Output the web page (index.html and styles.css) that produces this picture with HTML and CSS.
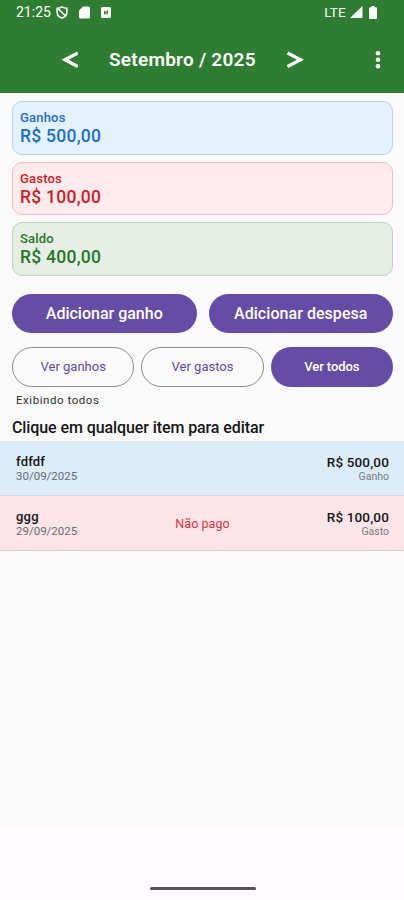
FILE: index.html
```html
<!DOCTYPE html>
<html lang="pt-BR">
<head>
<meta charset="utf-8">
<title>Setembro / 2025</title>
<link rel="stylesheet" href="styles.css">
</head>
<body>
<div class="screen">
  <header class="header">
    <div class="status">
      <span class="clock">21:25</span>
      <svg class="shield" width="12" height="13" viewBox="0 0 12 13" fill="none" stroke="#fff" stroke-width="1.600"><path d="M6 .9C4.500 1.900 3 2.200 1.200 2.300V6.500C1.200 9 3.300 11.200 6 12.100C8.700 11.200 10.800 9 10.800 6.500V2.300C9 2.200 7.500 1.900 6 .9Z"/><path d="M2 2.500L9.500 10"/></svg>
      <svg class="sd" width="11" height="13" viewBox="0 0 11 13"><path d="M4 .5H9.500Q11 .5 11 2V11Q11 12.500 9.500 12.500H1.500Q0 12.500 0 11V4.500Z" fill="#fff"/></svg>
      <svg class="note" width="10" height="11" viewBox="0 0 10 11"><rect width="10" height="11" rx="1.500" fill="#fff"/><path d="M3 7.500V3.500L5.500 5.500V3.500H7V7.500L4.500 6V7.500Z" fill="#2e7d32"/></svg>
      <span class="lte">LTE</span>
      <svg class="signal" width="13" height="12" viewBox="0 0 13 12"><path d="M12.500 0V12H0Z" fill="#fff"/></svg>
      <svg width="8" height="13" viewBox="0 0 8 13"><path d="M2.500 0H5.500V1.300H7Q8 1.300 8 2.300V12Q8 13 7 13H1Q0 13 0 12V2.300Q0 1.300 1 1.300H2.500Z" fill="#fff"/></svg>
    </div>
    <nav class="month">
      <svg width="16" height="18" viewBox="0 0 16 18" fill="none" stroke="#fff" stroke-width="3.300"><path d="M15.800 2L3 8.800L15.800 15.600"/></svg>
      <h1 class="title">Setembro / 2025</h1>
      <svg width="17" height="18" viewBox="0 0 17 18" fill="none" stroke="#fff" stroke-width="3.300"><path d="M.5 2L13.500 8.800L.5 15.600"/></svg>
      <svg class="more" width="6" height="20" viewBox="0 0 6 20" fill="#fff"><circle cx="3" cy="3.300" r="2.300"/><circle cx="3" cy="9.800" r="2.300"/><circle cx="3" cy="16.300" r="2.300"/></svg>
    </nav>
  </header>
  <main class="content">
    <section class="cards">
      <div class="card income"><span class="label">Ganhos</span><span class="amount">R$ 500,00</span></div>
      <div class="card expense"><span class="label">Gastos</span><span class="amount">R$ 100,00</span></div>
      <div class="card balance"><span class="label">Saldo</span><span class="amount">R$ 400,00</span></div>
    </section>
    <div class="actions">
      <button class="button solid add-income">Adicionar ganho</button>
      <button class="button solid">Adicionar despesa</button>
    </div>
    <div class="filters">
      <button class="button outline">Ver ganhos</button>
      <button class="button outline">Ver gastos</button>
      <button class="button solid active">Ver todos</button>
    </div>
    <p class="showing">Exibindo todos</p>
    <h2 class="hint">Clique em qualquer item para editar</h2>
    <div class="list">
      <div class="row row-income">
        <div class="info"><span class="name">fdfdf</span><span class="date">30/09/2025</span></div>
        <span class="state"></span>
        <div class="info right"><span class="value">R$ 500,00</span><span class="kind">Ganho</span></div>
      </div>
      <div class="row row-expense">
        <div class="info"><span class="name">ggg</span><span class="date">29/09/2025</span></div>
        <span class="state">Não pago</span>
        <div class="info right"><span class="value">R$ 100,00</span><span class="kind">Gasto</span></div>
      </div>
    </div>
  </main>
  <footer class="footer"><div class="handle"></div></footer>
</div>
</body>
</html>
```
FILE: styles.css
```css
* { box-sizing: border-box; margin: 0; padding: 0; }
body { font-family: Roboto, sans-serif; color: #151515; }
.screen { width: 404px; height: 900px; display: flex; flex-direction: column; background: #fafafa; overflow: hidden; }
svg { display: block; flex: none; }
.header { height: 93px; background: #2e7d32; color: #fff; flex: none; }
.status { height: 25px; display: flex; align-items: center; padding: 0 27px 1px 16px; }
.clock { font-size: 14px; width: 40px; }
.sd { margin-left: 11px; }
.note { margin-left: 11px; }
.lte { margin-left: auto; font-size: 13.500px; letter-spacing: .2px; }
.signal { margin: 0 6px 0 4px; }
.month { height: 68px; display: flex; align-items: center; padding: 1px 23px 0 62px; }
.title { width: 148px; margin: 0 30px 0 31px; font-size: 19px; font-weight: 600; letter-spacing: .25px; white-space: nowrap; }
.more { margin-left: auto; }
.content { height: 735px; flex: none; padding-top: 8px; }
.cards { display: flex; flex-direction: column; gap: 7px; padding: 0 11px 0 12px; }
.card { height: 54px; border: 1px solid; border-radius: 10px; padding: 7px 7px; display: flex; flex-direction: column; }
.card.expense { height: 53px; }
.label { font-size: 13px; line-height: 17px; font-weight: 500; letter-spacing: .2px; }
.amount { font-size: 17.500px; line-height: 20px; font-weight: 500; letter-spacing: .25px; }
.income { background: #e3f2fd; border-color: #b5d5f3; color: #1f6dcb; }
.expense { background: #ffebed; border-color: #efbfc6; color: #cc1e27; }
.balance { background: #e6eee6; border-color: #bfd0c0; color: #25772a; }
.actions { display: grid; grid-template-columns: 1fr 1fr; gap: 12px; padding: 18px 11px 0 12px; }
.filters { display: grid; grid-template-columns: 1fr 1fr 1fr; gap: 7px; padding: 14px 11px 0 12px; }
.button { height: 39px; border: 0; border-radius: 20px; font-family: inherit; font-size: 16px; font-weight: 500; letter-spacing: .05px; white-space: nowrap; }
.add-income { letter-spacing: 0; }
.filters .button { height: 40px; font-size: 13px; font-weight: 400; letter-spacing: 0; padding-bottom: 2px; }
.solid { background: #654da5; color: #fff; }
.filters .outline { background: transparent; border: 1px solid #8d8b92; color: #6049a5; }
.filters .active { font-weight: 500; letter-spacing: -.1px; }
.showing { padding: 6px 16px 0; font-size: 11.500px; line-height: 14px; letter-spacing: .55px; color: #303030; }
.hint { padding: 12px 12px 0; font-size: 16px; line-height: 18px; font-weight: 500; letter-spacing: -.09px; white-space: nowrap; }
.list { padding-top: 4px; }
.row { height: 55px; display: grid; grid-template-columns: 1fr 1fr 1fr; align-items: center; padding: 0 15px 0 16px; border-bottom: 1px solid #dfccd4; }
.row-income { background: #dcecf9; border-bottom-color: #d2d9e7; }
.row-expense { background: #fce4e8; }
.info { display: flex; flex-direction: column; }
.right { align-items: flex-end; }
.name { font-size: 13px; line-height: 15px; font-weight: 500; letter-spacing: .2px; }
.date { font-size: 11.500px; line-height: 14px; color: #666b72; }
.state { text-align: center; font-size: 12.500px; font-weight: 400; letter-spacing: .05px; color: #d93640; }
.value { font-size: 13.500px; line-height: 16px; font-weight: 500; letter-spacing: .15px; }
.kind { font-size: 10.500px; line-height: 13px; color: #777b82; }
.footer { flex: 1; background: #fffbff; padding-top: 59px; }
.handle { width: 106px; height: 3px; margin: 0 auto; border-radius: 2px; background: #555356; position: relative; left: 1px; }
```
